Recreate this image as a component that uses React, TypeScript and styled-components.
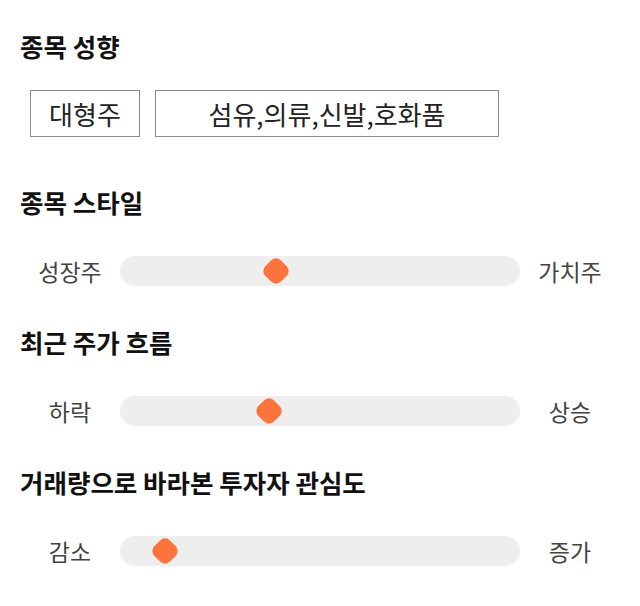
import React from "react";
import styled, { createGlobalStyle } from "styled-components";

const Global = createGlobalStyle`
  html, body { margin: 0; padding: 0; background: #fff; }
  body { font-family: "Noto Sans CJK KR", "Noto Sans", sans-serif; }
`;

const Page = styled.div`
  padding: 30px 20px 0 20px;
  width: 600px;
  display: flex;
  flex-direction: column;
`;

const Section = styled.section<{ $gap: number; $after: number }>`
  display: flex;
  flex-direction: column;
  gap: ${(p) => p.$gap}px;
  margin-bottom: ${(p) => p.$after}px;
`;

const Title = styled.h2`
  margin: 0;
  height: 32px;
  line-height: 32px;
  font-size: 25.5px;
  font-weight: 700;
  color: #111;
  white-space: nowrap;
`;

const Tags = styled.div`
  display: flex;
  gap: 15px;
  padding-left: 10px;
`;

const Tag = styled.div<{ $w: number }>`
  width: ${(p) => p.$w}px;
  height: 47px;
  box-sizing: border-box;
  border: 1px solid #8a8a8a;
  display: flex;
  align-items: center;
  justify-content: center;
  font-size: 26px;
  color: #222;
  white-space: nowrap;
`;

const SliderRow = styled.div`
  display: grid;
  grid-template-columns: 100px 1fr 100px;
  align-items: center;
  height: 30px;
`;

const Label = styled.span`
  text-align: center;
  font-size: 23px;
  line-height: 30px;
  color: #444;
  white-space: nowrap;
`;

const Track = styled.div`
  position: relative;
  height: 30px;
  border-radius: 15px;
  background: #eeeeee;
`;

const Thumb = styled.div`
  position: absolute;
  top: 4px;
  width: 22px;
  height: 22px;
  margin-left: -11px;
  border-radius: 7px;
  background: #ff743d;
  transform: rotate(45deg);
`;

const sliders = [
  { title: "종목 스타일", left: "성장주", right: "가치주", pos: 39 },
  { title: "최근 주가 흐름", left: "하락", right: "상승", pos: 37.25 },
  { title: "거래량으로 바라본 투자자 관심도", left: "감소", right: "증가", pos: 11.25 },
];

export default function App() {
  return (
    <>
      <Global />
      <Page>
        <Section $gap={28} $after={49}>
          <Title>종목 성향</Title>
          <Tags>
            <Tag $w={110}>대형주</Tag>
            <Tag $w={344}>섬유,의류,신발,호화품</Tag>
          </Tags>
        </Section>
        {sliders.map((s) => (
          <Section key={s.title} $gap={38} $after={40}>
            <Title>{s.title}</Title>
            <SliderRow>
              <Label>{s.left}</Label>
              <Track>
                <Thumb style={{ left: `${s.pos}%` }} />
              </Track>
              <Label>{s.right}</Label>
            </SliderRow>
          </Section>
        ))}
      </Page>
    </>
  );
}
